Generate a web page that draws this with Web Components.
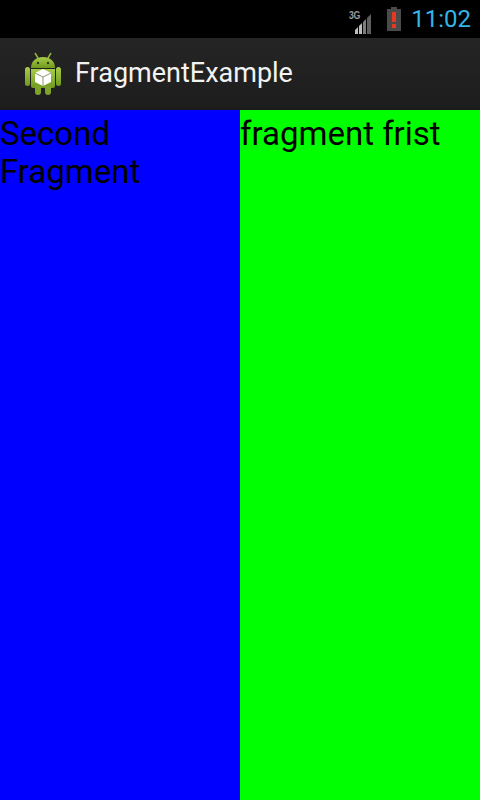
<!DOCTYPE html>
<html>
<head>
<meta charset="utf-8">
<title>FragmentExample</title>
<style>
  html, body { margin: 0; height: 100%; background: #000; font-family: Roboto, sans-serif; }
  body { display: flex; flex-direction: column; height: 800px; overflow: hidden; }
</style>
</head>
<body>
<status-bar time="11:02"></status-bar>
<action-bar title="FragmentExample"></action-bar>
<fragment-row>
  <text-fragment color="#0000ff">Second Fragment</text-fragment>
  <text-fragment color="#00ff00">fragment frist</text-fragment>
</fragment-row>

<script>
// top status bar with network, battery and clock
customElements.define('status-bar', class extends HTMLElement {
    constructor() {
        super();
        this.attachShadow({ mode: 'open' });
    }

    connectedCallback() {
        const time = this.getAttribute('time') || '';
        this.shadowRoot.innerHTML = `
            <style>
                :host {
                    display: flex;
                    align-items: center;
                    justify-content: flex-end;
                    height: 38px;
                    background: #000;
                    flex: none;
                }
                .net { position: relative; width: 28px; height: 30px; margin-right: 10px; }
                .net svg { display: block; }
                .net span {
                    position: absolute;
                    left: 1px;
                    top: 5px;
                    font: bold 11px/12px "Liberation Sans", sans-serif;
                    letter-spacing: -0.5px;
                    color: #9a9a9a;
                    transform: scaleX(.8);
                    transform-origin: left top;
                }
                .battery { display: block; margin-right: 9px; }
                .time {
                    font: 24px/30px Roboto, sans-serif;
                    color: #33b5e5;
                    margin-right: 9px;
                }
            </style>
            <div class="net">
                <span>3G</span>
                <svg width="28" height="30" viewBox="0 0 28 30">
                    <path d="M7 30V26L10 23V30Z" fill="#bdbdbd"/>
                    <path d="M11 30V22L14 19V30Z" fill="#bdbdbd"/>
                    <path d="M15 30V18L18 15V30Z" fill="#7d7d7d"/>
                    <path d="M19 30V14L23 10V30Z" fill="#5f5f5f"/>
                </svg>
            </div>
            <svg class="battery" width="16" height="24" viewBox="0 0 16 24">
                <path d="M5 0H11V2H15V24H1V2H5Z" fill="#4a4a4a"/>
                <rect x="6" y="5" width="4" height="10" fill="#e53a1e"/>
                <rect x="6" y="17" width="4" height="4" fill="#e53a1e"/>
            </svg>
            <div class="time">${time}</div>
        `;
    }
});

// title bar under the status bar
customElements.define('action-bar', class extends HTMLElement {
    constructor() {
        super();
        this.attachShadow({ mode: 'open' });
    }

    connectedCallback() {
        const title = this.getAttribute('title') || '';
        this.shadowRoot.innerHTML = `
            <style>
                :host {
                    display: flex;
                    align-items: center;
                    height: 72px;
                    box-sizing: border-box;
                    background: #212121;
                    background: linear-gradient(#252525, #1d1d1d);
                    border-bottom: 2px solid #1a1a1a;
                    flex: none;
                }
                svg { display: block; margin-left: 24px; flex: none; }
                .title {
                    margin-left: 13px;
                    font: 27px/36px Roboto, sans-serif;
                    color: #f2f2f2;
                }
            </style>
            <svg width="38" height="44" viewBox="0 0 38 44">
                <defs>
                    <linearGradient id="g" x1="0" y1="0" x2="0" y2="1">
                        <stop offset="0" stop-color="#a8cc4a"/>
                        <stop offset="1" stop-color="#6f9a1e"/>
                    </linearGradient>
                </defs>
                <path d="M11 2L14 7M27 2L24 7" stroke="#8fb53a" stroke-width="1.5"/>
                <path d="M7 17C7 10 12 6 19 6S31 10 31 17Z" fill="url(#g)"/>
                <circle cx="14" cy="12" r="1.2" fill="#2a3a10"/>
                <circle cx="24" cy="12" r="1.2" fill="#2a3a10"/>
                <rect x="1" y="16" width="5" height="19" rx="2.5" fill="url(#g)"/>
                <rect x="32" y="16" width="5" height="19" rx="2.5" fill="url(#g)"/>
                <path d="M7 18H31V35Q31 37 29 37H9Q7 37 7 35Z" fill="url(#g)"/>
                <rect x="11" y="34" width="6" height="10" rx="3" fill="#7ea32a"/>
                <rect x="21" y="34" width="6" height="10" rx="3" fill="#7ea32a"/>
                <path d="M19 18L27 22V31L19 35L11 31V22Z" fill="#fff"/>
                <path d="M11 22L19 26L27 22M19 26V35" fill="none" stroke="#8a9a70" stroke-width="1"/>
            </svg>
            <div class="title">${title}</div>
        `;
    }
});

// two equal columns
customElements.define('fragment-row', class extends HTMLElement {
    constructor() {
        super();
        this.attachShadow({ mode: 'open' });
        this.shadowRoot.innerHTML = `
            <style>
                :host { display: grid; grid-template-columns: 1fr 1fr; flex: 1; min-height: 0; }
            </style>
            <slot></slot>
        `;
    }
});

customElements.define('text-fragment', class extends HTMLElement {
    constructor() {
        super();
        this.attachShadow({ mode: 'open' });
    }

    connectedCallback() {
        const color = this.getAttribute('color') || '#fff';
        this.shadowRoot.innerHTML = `
            <style>
                :host {
                    display: block;
                    background: ${color};
                    color: #000;
                    font: 33px/38px Roboto, sans-serif;
                    padding: 5px 0 0 0;
                }
            </style>
            <slot></slot>
        `;
    }
});
</script>
</body>
</html>
